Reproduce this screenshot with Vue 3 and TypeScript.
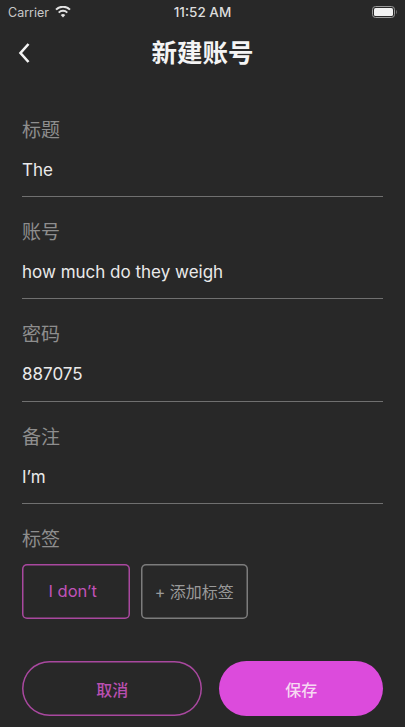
<script setup lang="ts">
const fields = [
  { label: '标题', value: 'The' },
  { label: '账号', value: 'how much do they weigh' },
  { label: '密码', value: '887075' },
  { label: '备注', value: 'I’m' },
]
</script>

<template>
  <div class="page">
    <div class="status">
      <div class="status-left">
        <span>Carrier</span>
        <svg class="wifi" width="16" height="12" viewBox="0 0 16 12">
          <path d="M8 11.6 L5.7 9.1 A3.4 3.4 0 0 1 10.3 9.1 Z" fill="#e2e2e2" />
          <path d="M3.7 6.6 A6.2 6.2 0 0 1 12.3 6.6" fill="none" stroke="#e2e2e2" stroke-width="2" />
          <path d="M1 3.6 A10 10 0 0 1 15 3.6" fill="none" stroke="#e2e2e2" stroke-width="2" />
        </svg>
      </div>
      <span class="time">11:52 AM</span>
      <svg class="battery" width="25" height="12" viewBox="0 0 25 12">
        <rect x="0.5" y="0.5" width="22" height="11" rx="3" fill="none" stroke="#9a9a9a" />
        <rect x="2" y="2" width="19" height="8" rx="1.6" fill="#f2f2f2" />
        <path d="M24 4 C24.8 4.3 24.8 7.7 24 8 Z" fill="#9a9a9a" />
      </svg>
    </div>
    <div class="nav">
      <svg class="back" width="14" height="24" viewBox="0 0 14 24">
        <path d="M11.5 3 L3.5 12 L11.5 21" fill="none" stroke="#f4f4f4" stroke-width="2.6" />
      </svg>
      <span class="title">新建账号</span>
    </div>
    <div class="form">
      <div v-for="f in fields" :key="f.label" class="field">
        <div class="label">{{ f.label }}</div>
        <div class="value">{{ f.value }}</div>
      </div>
      <div class="label tags-label">标签</div>
      <div class="tags">
        <div class="tag tag-on"><span class="tag-text">I don’t</span></div>
        <div class="tag tag-add">+ 添加标签</div>
      </div>
      <div class="actions">
        <div class="btn cancel">取消</div>
        <div class="btn save">保存</div>
      </div>
    </div>
  </div>
</template>

<style>
html, body { margin: 0; background: #282828; }
</style>

<style scoped>
.page {
  width: 405px;
  height: 727px;
  overflow: hidden;
  background: #282828;
  font-family: Inter, "Noto Sans CJK SC", sans-serif;
  position: relative;
}
.status {
  height: 24px;
  padding: 0 8px;
  display: grid;
  grid-template-columns: 1fr auto 1fr;
  align-items: center;
  color: #c8c8c8;
  font-size: 12.5px;
}
.status-left { display: flex; align-items: center; gap: 6px; }
.battery { justify-self: end; }
.time { color: #dcdcdc; font-size: 13.5px; font-weight: 500; }
.nav {
  height: 58px;
  padding: 0 17px;
  display: flex;
  align-items: center;
  position: relative;
}
.title {
  position: absolute;
  left: 0;
  right: 0;
  padding-bottom: 6px;
  text-align: center;
  color: #f4f4f4;
  font-size: 25.5px;
  font-weight: 700;
}
.form { padding: 0 22px; }
.field {
  height: 102.5px;
  padding-top: 22px;
  border-bottom: 1px solid #707070;
  box-sizing: border-box;
}
.form > .field:first-child { height: 114.5px; padding-top: 35px; }
.label {
  color: #8e8e8e;
  font-size: 19px;
  line-height: 28px;
}
.value {
  margin-top: 13px;
  color: #eaeaea;
  font-size: 17px;
  line-height: 24px;
}
.tags-label { margin-top: 22px; }
.tags { display: flex; gap: 11px; margin-top: 10px; }
.tag {
  width: 107.5px;
  height: 54.5px;
  box-sizing: border-box;
  border-radius: 5px;
  display: flex;
  align-items: center;
  justify-content: center;
  font-size: 16px;
}
.tag-on { box-shadow: inset 0 0 0 1.5px #a9489f; color: #c052b8; font-size: 16.5px; }
.tag-text { margin-right: 6px; }
.tag-add { box-shadow: inset 0 0 0 1.5px #7c7c7c; color: #9a9a9a; }
.actions { display: flex; gap: 17px; margin-top: 42.5px; }
.btn {
  height: 55px;
  box-sizing: border-box;
  border-radius: 28px;
  display: flex;
  align-items: center;
  justify-content: center;
  font-size: 16px;
  font-weight: 500;
}
.cancel { width: 181px; box-shadow: inset 0 0 0 1.5px #a9489f; color: #b84fb0; }
.save { width: 164px; background: #dc4bdc; color: #f6d8f2; }
</style>
